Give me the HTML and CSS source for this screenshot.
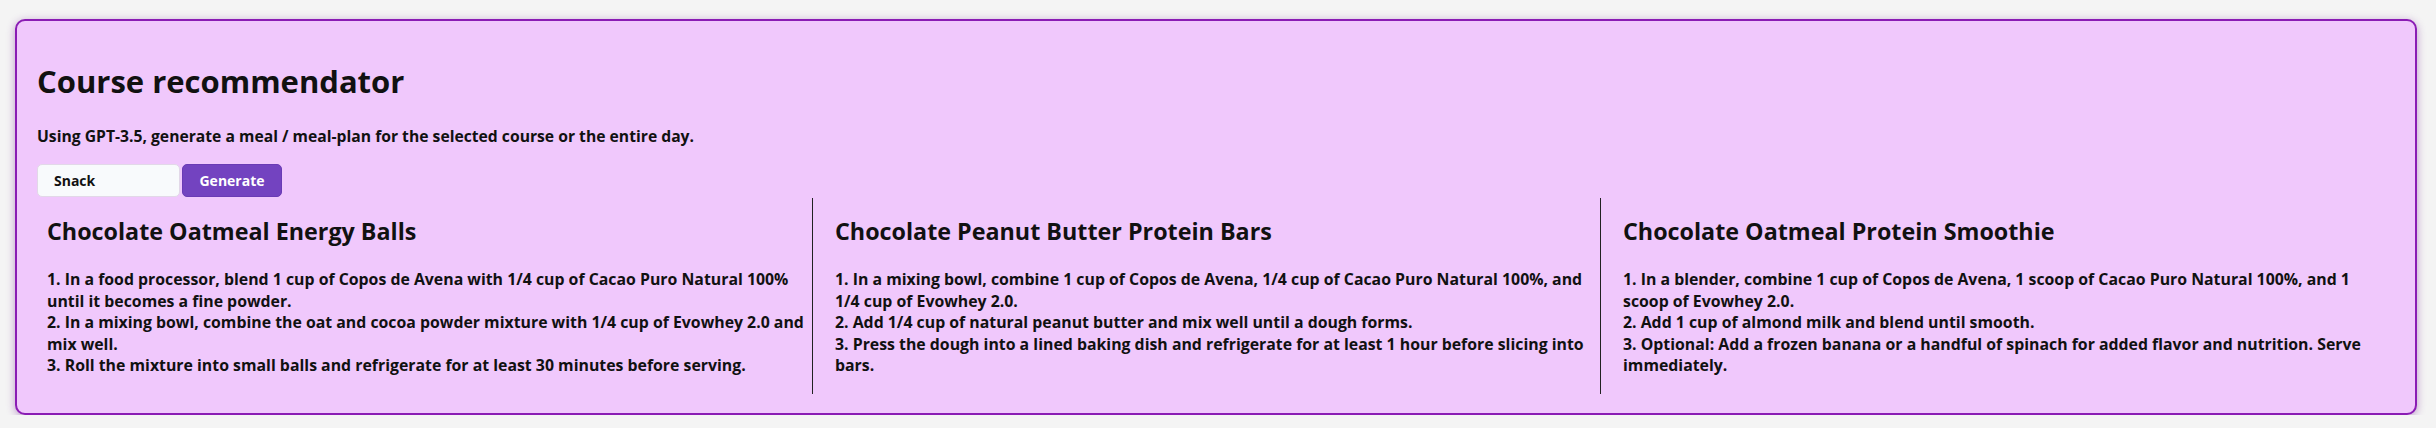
FILE: index.html
```html
<!DOCTYPE html>
<html lang="en">
<head>
<meta charset="utf-8">
<title>Course recommender</title>
<link rel="stylesheet" href="styles.css">
</head>
<body>
<section class="card">
  <h1 class="title">Course recommendator</h1>
  <p class="subtitle">Using GPT-3.5, generate a meal / meal-plan for the selected course or the entire day.</p>
  <div class="controls">
    <div class="select">Snack</div>
    <button class="btn" type="button">Generate</button>
  </div>
  <div class="results">
    <article class="recipe">
      <h2 class="recipe-title">Chocolate Oatmeal Energy Balls</h2>
      <p class="steps">1. In a food processor, blend 1 cup of Copos de Avena with 1/4 cup of Cacao Puro Natural 100% until it becomes a fine powder.<br>2. In a mixing bowl, combine the oat and cocoa powder mixture with 1/4 cup of Evowhey 2.0 and mix well.<br>3. Roll the mixture into small balls and refrigerate for at least 30 minutes before serving.</p>
    </article>
    <article class="recipe">
      <h2 class="recipe-title">Chocolate Peanut Butter Protein Bars</h2>
      <p class="steps">1. In a mixing bowl, combine 1 cup of Copos de Avena, 1/4 cup of Cacao Puro Natural 100%, and 1/4 cup of Evowhey 2.0.<br>2. Add 1/4 cup of natural peanut butter and mix well until a dough forms.<br>3. Press the dough into a lined baking dish and refrigerate for at least 1 hour before slicing into bars.</p>
    </article>
    <article class="recipe last">
      <h2 class="recipe-title">Chocolate Oatmeal Protein Smoothie</h2>
      <p class="steps">1. In a blender, combine 1 cup of Copos de Avena, 1 scoop of Cacao Puro Natural 100%, and 1 scoop of Evowhey 2.0.<br>2. Add 1 cup of almond milk and blend until smooth.<br>3. Optional: Add a frozen banana or a handful of spinach for added flavor and nutrition. Serve immediately.</p>
    </article>
  </div>
</section>
</body>
</html>
```
FILE: styles.css
```css
* { box-sizing: border-box; }
html, body { margin: 0; padding: 0; }
body {
  background: #f4f4f4;
  font-family: "Open Sans", "Noto Sans", sans-serif;
  color: #111;
  padding: 19px 19px 0 15px;
}
.card {
  background: #f0c8fc;
  border: 2px solid #8a1cb4;
  border-radius: 10px;
  box-shadow: 0 2px 8px rgba(120, 40, 150, 0.45);
  padding: 40px 26px 19px 20px;
}
.title {
  margin: 0;
  font-size: 31px;
  line-height: 40px;
  font-weight: 700;
}
.subtitle {
  margin: 25px 0 0;
  font-size: 15.7px;
  line-height: 20px;
  font-weight: 700;
}
.controls {
  display: flex;
  margin-top: 18px;
  height: 33px;
}
.select {
  width: 143px;
  height: 33px;
  background: #f8fafc;
  border: 1px solid #e2d8e8;
  border-radius: 5px;
  padding-left: 16px;
  font-size: 14px;
  font-weight: 700;
  line-height: 31px;
}
.btn {
  margin-left: 2px;
  width: 100px;
  height: 33px;
  background: #7343c0;
  border: 1px solid #6a3bb5;
  border-radius: 5px;
  color: #fff;
  font-family: inherit;
  font-size: 14px;
  font-weight: 700;
  padding: 0;
}
.results {
  display: grid;
  grid-template-columns: repeat(3, 1fr);
  gap: 12px;
  margin-top: 1px;
}
.recipe {
  border-right: 1px solid #222;
  padding: 18px 0 17px 10px;
}
.recipe.last { border-right: none; }
.recipe-title {
  margin: 0;
  font-size: 23.3px;
  line-height: 30px;
  font-weight: 700;
}
.steps {
  margin: 23px 0 0;
  font-size: 15.85px;
  line-height: 21.5px;
  font-weight: 700;
}
```
